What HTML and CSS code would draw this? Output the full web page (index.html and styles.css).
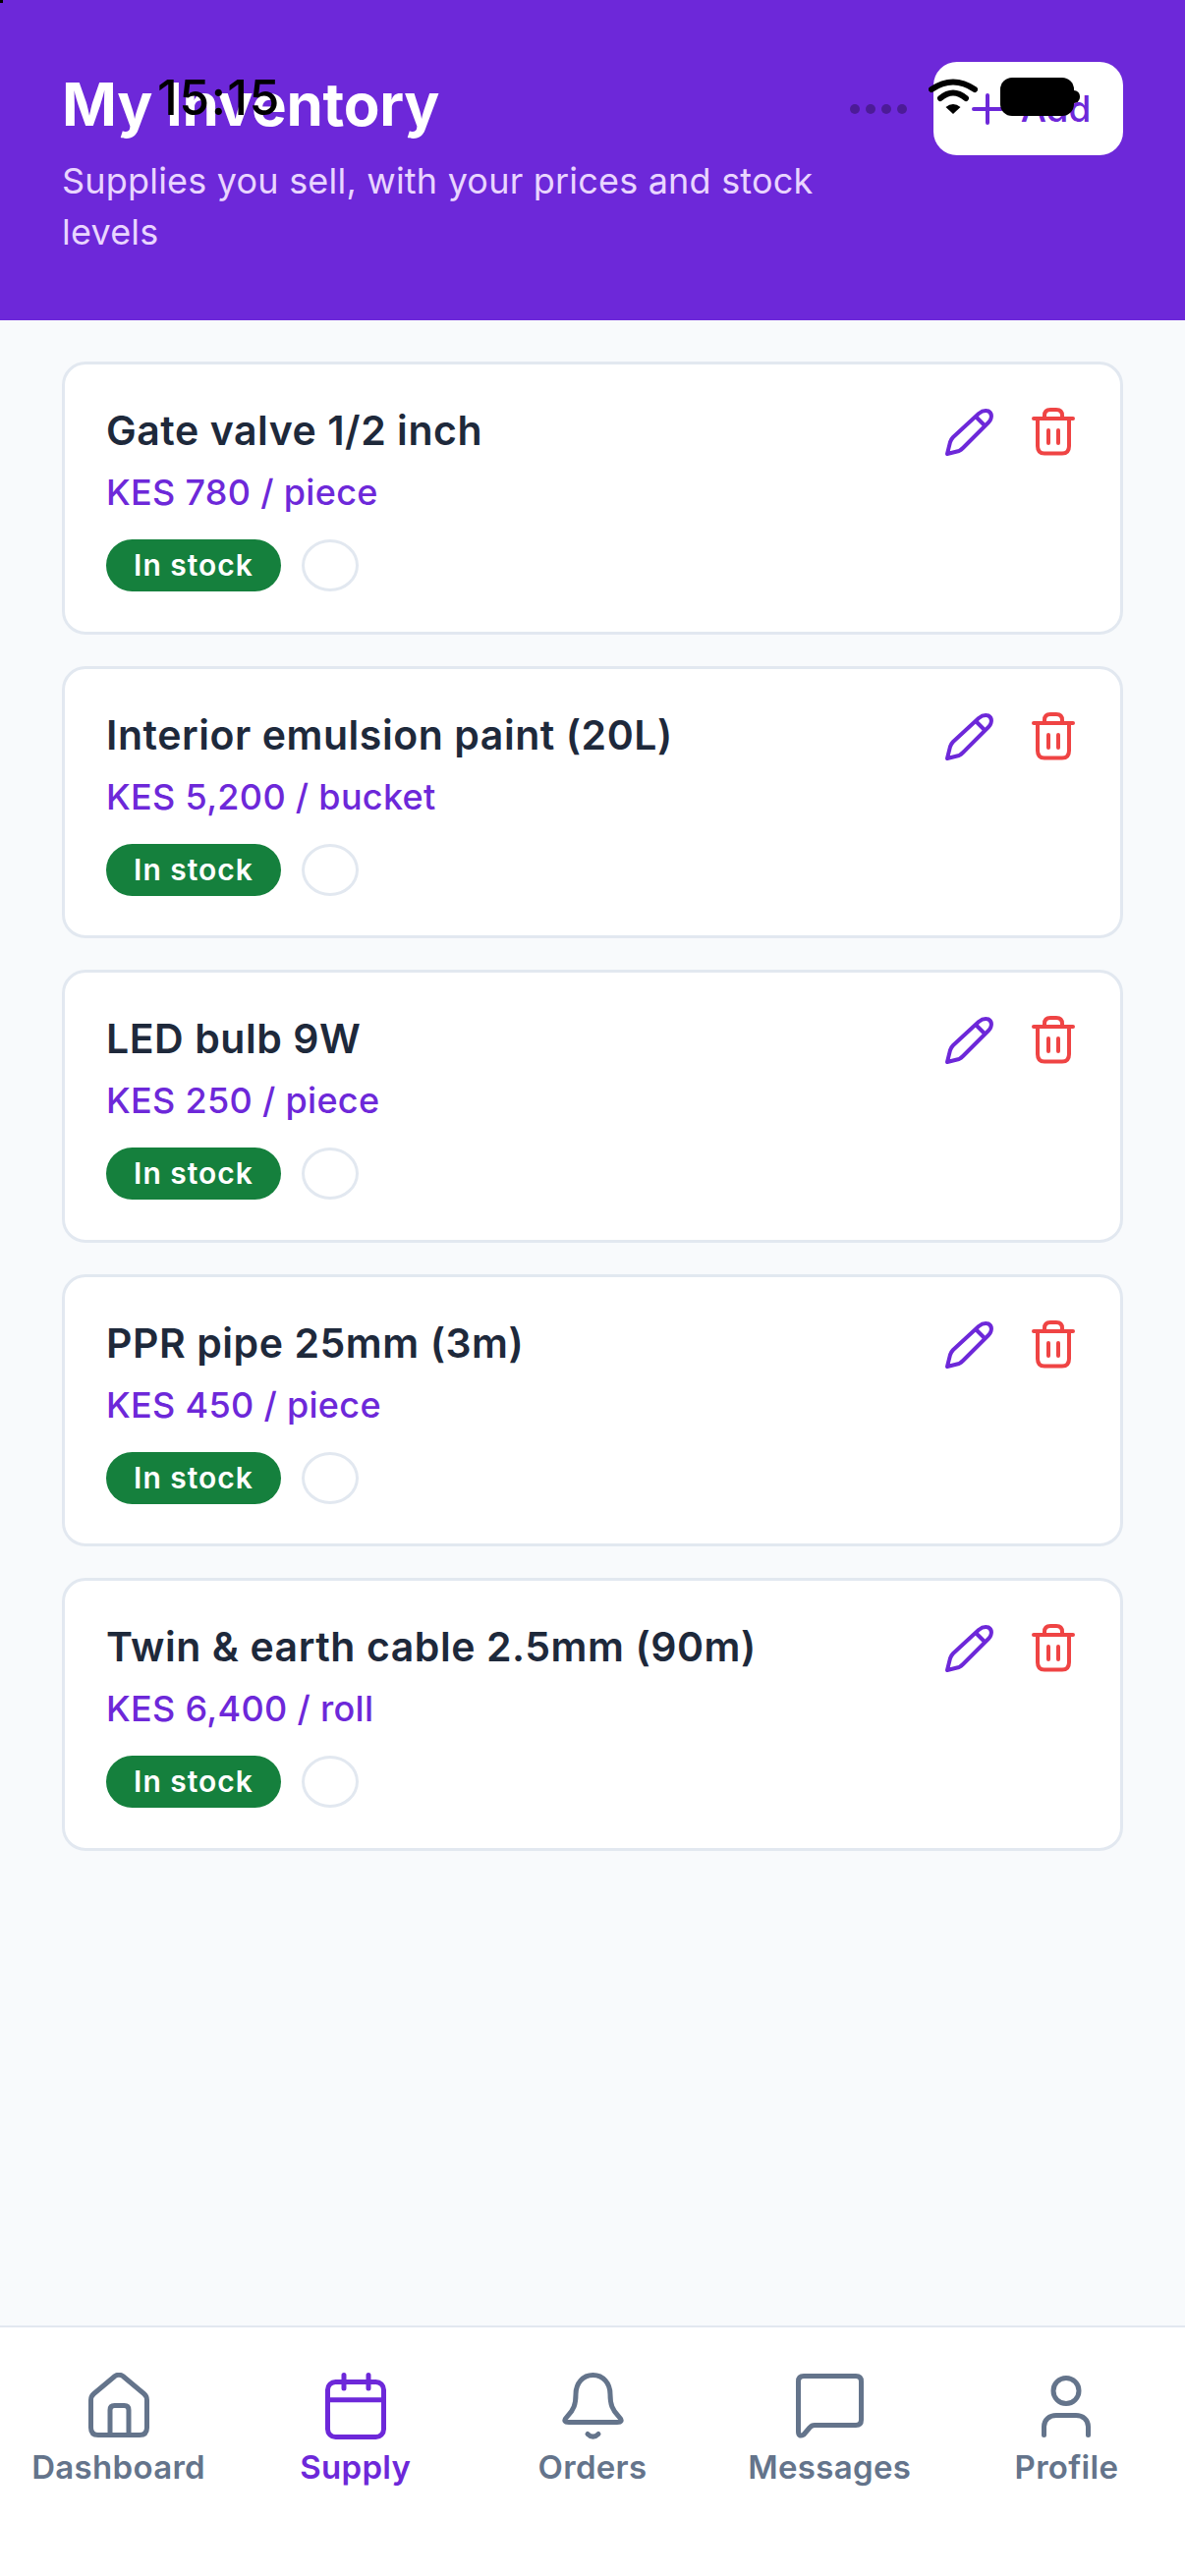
FILE: index.html
```html
<!DOCTYPE html>
<html lang="en">
<head>
    <meta charset="UTF-8">
    <meta name="viewport" content="width=device-width, initial-scale=1.0">
    <title>My Inventory</title>
    <link rel="stylesheet" href="styles.css">
</head>
<body>

    <svg class="sprite" width="0" height="0">
        <symbol id="pencil" viewBox="0 0 49 49">
            <path d="M2 47 L5 35 Q6 32 8 30 L34 6 Q39 2 44 3.5 Q48 6 46.5 11 Q46 13 44 15 L18 41 Q16 43 14 44 Z"/>
            <path d="M32 10 L40 18"/>
        </symbol>
        <symbol id="trash" viewBox="0 0 44 49">
            <path d="M2 11 H42"/>
            <path d="M6 11 V39 Q6 46.5 13 46.5 H31 Q38 46.5 38 39 V11"/>
            <path d="M13 11 V8 Q13 2 19 2 H25 Q31 2 31 8 V11"/>
            <path d="M17 23 V36"/>
            <path d="M27 23 V36"/>
        </symbol>
    </svg>

    <header class="top-bar">
        <div class="top-text">
            <h1>My Inventory</h1>
            <p>Supplies you sell, with your prices and stock levels</p>
        </div>
        <button class="add-btn">
            <svg width="32" height="32" viewBox="0 0 32 32"><path d="M16 2 V30 M2 16 H30"/></svg>
            Add
        </button>
    </header>

    <!-- status bar drawn on top of the header -->
    <div class="status-bar">
        <span class="clock">15:15</span>
        <div class="status-right">
            <div class="signal"><i></i><i></i><i></i><i></i></div>
            <svg class="wifi" width="50" height="38" viewBox="0 0 50 38">
                <path d="M3 12 Q25 -3 47 12"/>
                <path d="M12 21 Q25 10 38 21"/>
                <path class="wifi-dot" d="M25 37 L17.5 30 Q25 24 32.5 30 Z"/>
            </svg>
            <div class="battery"></div>
        </div>
    </div>
    <div class="corner-mark"></div>

    <main class="item-list">
        <article class="item-card">
            <div class="item-info">
                <h2>Gate valve 1/2 inch</h2>
                <p class="price">KES 780 / piece</p>
                <div class="tags"><span class="badge">In stock</span><span class="empty-tag"></span></div>
            </div>
            <div class="item-actions">
                <svg class="ico-edit" width="49" height="49"><use href="#pencil"/></svg>
                <svg class="ico-del" width="44" height="49"><use href="#trash"/></svg>
            </div>
        </article>
        <article class="item-card">
            <div class="item-info">
                <h2>Interior emulsion paint (20L)</h2>
                <p class="price">KES 5,200 / bucket</p>
                <div class="tags"><span class="badge">In stock</span><span class="empty-tag"></span></div>
            </div>
            <div class="item-actions">
                <svg class="ico-edit" width="49" height="49"><use href="#pencil"/></svg>
                <svg class="ico-del" width="44" height="49"><use href="#trash"/></svg>
            </div>
        </article>
        <article class="item-card">
            <div class="item-info">
                <h2>LED bulb 9W</h2>
                <p class="price">KES 250 / piece</p>
                <div class="tags"><span class="badge">In stock</span><span class="empty-tag"></span></div>
            </div>
            <div class="item-actions">
                <svg class="ico-edit" width="49" height="49"><use href="#pencil"/></svg>
                <svg class="ico-del" width="44" height="49"><use href="#trash"/></svg>
            </div>
        </article>
        <article class="item-card">
            <div class="item-info">
                <h2>PPR pipe 25mm (3m)</h2>
                <p class="price">KES 450 / piece</p>
                <div class="tags"><span class="badge">In stock</span><span class="empty-tag"></span></div>
            </div>
            <div class="item-actions">
                <svg class="ico-edit" width="49" height="49"><use href="#pencil"/></svg>
                <svg class="ico-del" width="44" height="49"><use href="#trash"/></svg>
            </div>
        </article>
        <article class="item-card">
            <div class="item-info">
                <h2>Twin &amp; earth cable 2.5mm (90m)</h2>
                <p class="price">KES 6,400 / roll</p>
                <div class="tags"><span class="badge">In stock</span><span class="empty-tag"></span></div>
            </div>
            <div class="item-actions">
                <svg class="ico-edit" width="49" height="49"><use href="#pencil"/></svg>
                <svg class="ico-del" width="44" height="49"><use href="#trash"/></svg>
            </div>
        </article>
    </main>

    <nav class="tab-bar">
        <div class="tab">
            <svg width="62" height="68" viewBox="0 0 62 68">
                <path d="M2.5 28 Q2.5 24 5.5 21.5 L27 3.5 Q31 1 35 3.5 L56.5 21.5 Q59.5 24 59.5 28 V56 Q59.5 63.5 52 63.5 H10 Q2.5 63.5 2.5 56 Z"/>
                <path d="M22 63 V38 Q22 33.5 26.5 33.5 H36.5 Q41 33.5 41 38 V63"/>
            </svg>
            <span>Dashboard</span>
        </div>
        <div class="tab active">
            <svg width="62" height="68" viewBox="0 0 62 68">
                <rect x="2.5" y="9.5" width="57" height="56" rx="8"/>
                <path d="M2.5 27.7 H59.5"/>
                <path d="M19 2.5 V16 M44 2.5 V16"/>
            </svg>
            <span>Supply</span>
        </div>
        <div class="tab">
            <svg width="63" height="68" viewBox="0 0 63 68">
                <path d="M31.5 2.5 C21 2.5 14 11 14 22 C14 32 12 38 5 45 C1 49 3 50.5 7 50.5 H56 C60 50.5 62 49 58 45 C51 38 49 32 49 22 C49 11 42 2.5 31.5 2.5 Z"/>
                <path d="M26 62.5 Q31.5 68 37 62.5"/>
            </svg>
            <span>Orders</span>
        </div>
        <div class="tab">
            <svg width="69" height="68" viewBox="0 0 69 68">
                <path d="M2.5 9 Q2.5 3.5 8 3.5 H61 Q66.5 3.5 66.5 9 V48 Q66.5 53.5 61 53.5 H19 Q16 53.5 14 56 L8 63 Q2.5 66 2.5 60 Z"/>
            </svg>
            <span>Messages</span>
        </div>
        <div class="tab">
            <svg width="50" height="68" viewBox="0 0 50 68">
                <ellipse cx="25" cy="18.5" rx="13" ry="13"/>
                <path d="M2.5 63.5 V55 C2.5 48 8 43.5 15 43.5 H35 C42 43.5 47.5 48 47.5 55 V63.5"/>
            </svg>
            <span>Profile</span>
        </div>
    </nav>

</body>
</html>
```

FILE: styles.css
```css
:root {
    --purple: #6D28D9;
    --slate: #64748B;
    --line: #E2E8F0;
    --dark: #1E293B;
    --green: #15803D;
    --red: #EF4444;
}

* {
    box-sizing: border-box;
}

body {
    font-family: 'Inter', sans-serif;
    margin: 0;
    background-color: #F8FAFC;
    width: 1206px;
    height: 2622px;
    display: flex;
    flex-direction: column;
    position: relative;
    overflow: hidden;
}

.sprite {
    position: absolute;
}

/* Header */
.top-bar {
    height: 326px;
    background-color: var(--purple);
    padding: 63px 63px 0;
    display: flex;
    justify-content: space-between;
    align-items: flex-start;
    flex-shrink: 0;
}

.top-text {
    width: 780px;
}

.top-text h1 {
    margin: 0;
    color: #fff;
    font-size: 60px;
    font-weight: 700;
    line-height: 86px;
    letter-spacing: -0.3px;
}

.top-text p {
    margin: 0;
    margin-top: 9px;
    color: #E9D5FF;
    font-size: 36px;
    font-weight: 400;
    line-height: 52px;
    letter-spacing: 0.2px;
}

.add-btn {
    width: 193px;
    height: 95px;
    background-color: #fff;
    border: none;
    border-radius: 24px;
    padding-left: 12px;
    color: var(--purple);
    font-family: 'Inter', sans-serif;
    font-size: 37px;
    font-weight: 500;
    display: flex;
    align-items: center;
    justify-content: center;
    gap: 18px;
}

.add-btn svg {
    fill: none;
    stroke: var(--purple);
    stroke-width: 4;
    stroke-linecap: round;
}

/* Status bar overlay */
.status-bar {
    position: absolute;
    top: 0;
    left: 0;
    width: 100%;
    height: 130px;
    padding: 71px 113px 0 160px;
    display: flex;
    justify-content: space-between;
    align-items: flex-start;
}

.clock {
    font-size: 50px;
    font-weight: 500;
    line-height: 56px;
    letter-spacing: 1.5px;
    color: #000;
}

.status-right {
    display: flex;
    align-items: flex-start;
    padding-top: 8px;
}

.signal {
    display: flex;
    gap: 6px;
    margin-top: 27px;
    margin-right: 22px;
}

.signal i {
    width: 10px;
    height: 10px;
    border-radius: 50%;
    background-color: rgba(0, 0, 0, 0.3);
}

.wifi {
    fill: none;
    stroke: #000;
    stroke-width: 6;
    stroke-linecap: round;
    margin-right: 23px;
}

.wifi .wifi-dot {
    fill: #000;
    stroke: none;
}

.battery {
    width: 75px;
    height: 39px;
    background-color: #000;
    border-radius: 12px;
    position: relative;
}

.battery::after {
    content: "";
    position: absolute;
    left: 75px;
    top: 13px;
    width: 6px;
    height: 13px;
    background-color: #000;
    border-radius: 0 7px 7px 0;
}

.corner-mark {
    position: absolute;
    top: 0;
    left: 0;
    width: 3px;
    height: 3px;
    background-color: #000;
}

/* Cards */
.item-list {
    flex-grow: 1;
    padding: 42px 63px 0;
    display: flex;
    flex-direction: column;
    gap: 32px;
}

.item-card {
    height: 277.5px;
    background-color: #fff;
    border: 3px solid var(--line);
    border-radius: 24px;
    padding: 42px 42px 0;
    display: flex;
    justify-content: space-between;
    align-items: flex-start;
}

.item-info h2 {
    margin: 0;
    font-size: 41px;
    font-weight: 600;
    line-height: 50px;
    letter-spacing: 0.55px;
    color: var(--dark);
}

.item-info .price {
    margin: 13px 0 0;
    font-size: 36px;
    font-weight: 500;
    line-height: 50px;
    letter-spacing: 0.3px;
    color: var(--purple);
}

.tags {
    display: flex;
    gap: 21px;
    margin-top: 23px;
}

.badge {
    width: 178px;
    height: 53px;
    border-radius: 27px;
    background-color: var(--green);
    color: #fff;
    font-size: 30px;
    font-weight: 600;
    line-height: 53px;
    letter-spacing: 1px;
    text-align: center;
}

.empty-tag {
    width: 58px;
    height: 53px;
    border: 3px solid var(--line);
    border-radius: 50%;
    background-color: #fff;
}

.item-actions {
    display: flex;
    gap: 39px;
    margin-top: 2px;
    margin-right: 4px;
    fill: none;
    stroke-linecap: round;
    stroke-linejoin: round;
    stroke-width: 4;
}

.ico-edit {
    stroke: var(--purple);
}

.ico-del {
    stroke: var(--red);
}

/* Bottom tabs */
.tab-bar {
    height: 255px;
    flex-shrink: 0;
    background-color: #fff;
    border-top: 2px solid var(--line);
    padding-top: 46px;
    display: flex;
}

.tab {
    flex: 1;
    display: flex;
    flex-direction: column;
    align-items: center;
    gap: 7px;
    color: var(--slate);
    font-size: 33px;
    font-weight: 600;
    line-height: 42px;
    letter-spacing: 0.3px;
}

.tab svg {
    fill: none;
    stroke: var(--slate);
    stroke-width: 5;
    stroke-linecap: round;
    stroke-linejoin: round;
}

.tab.active {
    color: var(--purple);
}

.tab.active svg {
    stroke: var(--purple);
}
```
